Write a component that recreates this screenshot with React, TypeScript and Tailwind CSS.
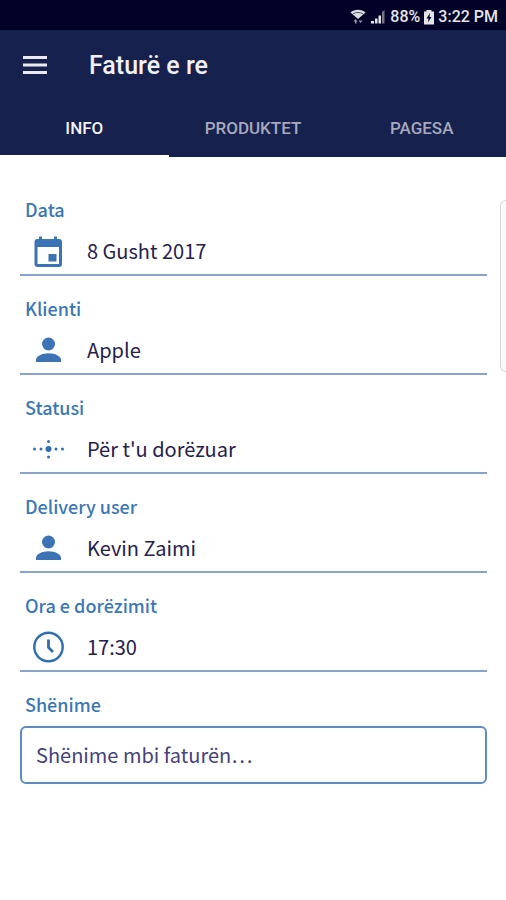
import React, { useState } from 'react';
import clsx from 'clsx';

const tabs = ['INFO', 'PRODUKTET', 'PAGESA'];

const CalendarIcon = () => (
  <svg viewBox="0 0 32 32" className="size-8" fill="#3b73b4">
    <path
      fillRule="evenodd"
      d="M7 1.500h3v2.500h12V1.500h3v2.500h2a3 3 0 0 1 3 3v22a3 3 0 0 1-3 3H5.500a3 3 0 0 1-3-3V7a3 3 0 0 1 3-3H7zM5.500 12v17h21.500V12z"
    />
    <path d="M16.500 19h8v7.500h-8z" />
  </svg>
);

const PersonIcon = () => (
  <svg viewBox="0 0 32 32" className="size-8" fill="#3b73b4">
    <circle cx="16.500" cy="10" r="6.500" />
    <path d="M4 28v-2c0-4 6-6.800 12.500-6.800S29 22 29 26v2z" />
  </svg>
);

const StatusIcon = () => (
  <svg viewBox="0 0 32 32" className="size-8" fill="#2f6fae">
    <circle cx="16.500" cy="16" r="3" />
    <circle cx="16.500" cy="8.500" r="1.500" />
    <circle cx="16.500" cy="24" r="1.500" />
    <circle cx="2.500" cy="16" r="1.500" />
    <circle cx="9" cy="16" r="1.500" />
    <circle cx="24" cy="16" r="1.500" />
    <circle cx="30.500" cy="16" r="1.500" />
  </svg>
);

const ClockIcon = () => (
  <svg viewBox="0 0 32 32" className="size-8" fill="none" stroke="#2f6fae">
    <circle cx="16.500" cy="16" r="14.200" strokeWidth="2.400" />
    <path d="M16.500 8.500v8l4.500 4.500" strokeWidth="2.800" />
  </svg>
);

const fields = [
  { id: 'data', label: 'Data', value: '8 Gusht 2017', Icon: CalendarIcon },
  { id: 'klienti', label: 'Klienti', value: 'Apple', Icon: PersonIcon },
  { id: 'statusi', label: 'Statusi', value: "Për t'u dorëzuar", Icon: StatusIcon },
  { id: 'delivery', label: 'Delivery user', value: 'Kevin Zaimi', Icon: PersonIcon },
  { id: 'ora', label: 'Ora e dorëzimit', value: '17:30', Icon: ClockIcon },
];

const StatusBar = () => (
  <div className="flex h-[30px] items-center justify-end bg-[#020128] pr-2 pt-1 text-base font-medium text-[#e4e4ea]">
    <svg viewBox="0 0 16 16" className="mr-1 size-4" fill="#dcdce2">
      <path d="M0.500 3.500C4-0.300 12-0.300 15.500 3.500L8 10z" />
      <path d="M3 4.800c3-1.800 7-1.800 10 0" fill="none" stroke="#020128" strokeOpacity="0.600" />
      <path d="M3.500 12.500 5.500 10l2 2.500zM5 12h1.500v2.500H5zM8.500 11.500h4L10.500 14z" fillOpacity="0.700" />
    </svg>
    <svg viewBox="0 0 16 16" className="mr-1 size-4">
      <path d="M1 14.500v-2.500h3v2.500zM5 14.500V9.500h2.500v5zM8.500 14.500V6.500H11v8z" fill="#e4e4ea" />
      <path d="M12 14.500V3l2.500-2v13.500z" fill="#77778c" />
    </svg>
    <span>88%</span>
    <svg viewBox="0 0 12 16" className="mx-[3px] h-4 w-3">
      <path d="M3.500 1h5v1.500h2.500v13H1v-13h2.500z" fill="#e4e4ea" />
      <path d="M7 4 3.500 9.500h2L5 13.500l3.500-5.500h-2z" fill="#020128" />
    </svg>
    <span>3:22 PM</span>
  </div>
);

const App: React.FC = () => {
  const [active, setActive] = useState('INFO');
  const [values, setValues] = useState<Record<string, string>>(
    Object.fromEntries(fields.map(f => [f.id, f.value]))
  );

  return (
    <div className="relative min-h-screen bg-white font-[Roboto,sans-serif]">
      <StatusBar />

      <header className="bg-[#17214e]">
        <div className="flex h-[70px] items-center gap-[42px] pl-[23px]">
          <button aria-label="Menu">
            <svg viewBox="0 0 24 18" className="h-[18px] w-6" fill="#e9e9ef">
              <path d="M0 0h24v3H0zM0 7.500h24v3H0zM0 15h24v3H0z" />
            </svg>
          </button>
          <h1 className="pt-[2px] text-[25px] font-medium text-[#f1f1f5]">Faturë e re</h1>
        </div>
        <nav className="grid grid-cols-3">
          {tabs.map(tab => (
            <button
              key={tab}
              onClick={() => setActive(tab)}
              className={clsx(
                'h-[57px] border-b-2 pt-[2px] text-[17px] font-medium',
                active === tab ? 'border-white text-[#f1f1f5]' : 'border-transparent text-[#a6a9bd]'
              )}
            >
              {tab}
            </button>
          ))}
        </nav>
      </header>

      <form className="flex flex-col gap-[22px] pt-[42px] pr-[19px] pl-5 font-['Noto_Sans_CJK_SC',sans-serif]">
        {fields.map(({ id, label, Icon }) => (
          <div key={id}>
            <label htmlFor={id} className="block pl-[5px] text-[18px] leading-5 font-medium text-[#3b77b5]">
              {label}
            </label>
            <div className="mt-2 flex h-[49px] items-center gap-[23px] border-b-2 border-[#8aa3cb] pl-3">
              <Icon />
              <input
                id={id}
                value={values[id]}
                onChange={e => setValues({ ...values, [id]: e.target.value })}
                className="min-w-0 flex-1 text-[20px] leading-8 text-[#25214c] outline-none"
              />
            </div>
          </div>
        ))}

        <div>
          <label htmlFor="shenime" className="block pl-[5px] text-[18px] leading-5 font-medium text-[#3b77b5]">
            Shënime
          </label>
          <textarea
            id="shenime"
            rows={1}
            placeholder="Shënime mbi faturën…"
            className="mt-3 block w-full resize-none rounded-md border-2 border-[#5f8cc0] px-[14px] py-[11px] text-[20px] leading-8 outline-none placeholder:text-[#46427a]"
          />
        </div>
      </form>

      {/* edge panel handle */}
      <div className="absolute top-[200px] right-0 h-[172px] w-[6px] rounded-l-lg border border-r-0 border-[#d9d9d9] bg-[#fafafa]" />
    </div>
  );
};

export default App;
